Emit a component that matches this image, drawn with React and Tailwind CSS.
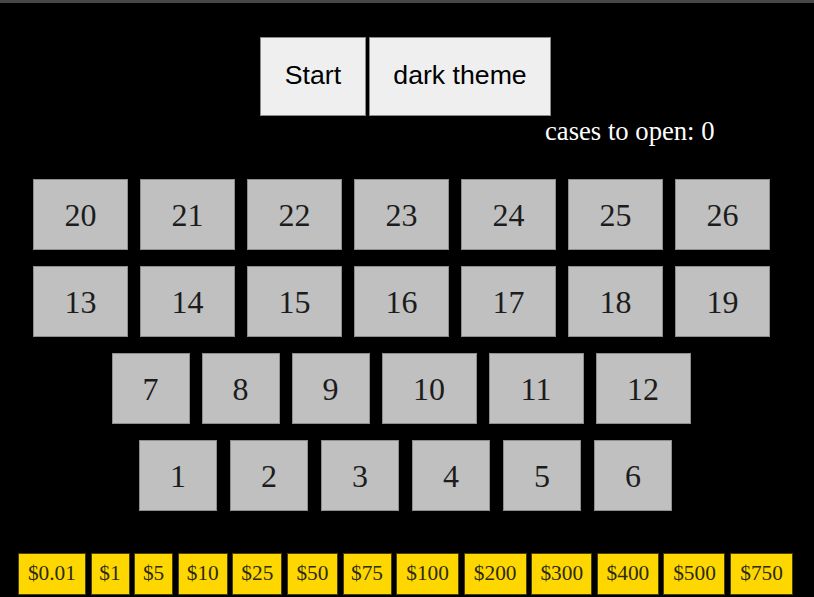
import React from "react";

const row1 = ["20", "21", "22", "23", "24", "25", "26"];
const row2 = ["13", "14", "15", "16", "17", "18", "19"];
const row3 = ["7", "8", "9", "10", "11", "12"];
const row4 = ["1", "2", "3", "4", "5", "6"];

const money = [
  { t: "$0.01", w: "w-[68px]" },
  { t: "$1", w: "w-[39px]" },
  { t: "$5", w: "w-[39px]" },
  { t: "$10", w: "w-[50px]" },
  { t: "$25", w: "w-[50px]" },
  { t: "$50", w: "w-[51px]" },
  { t: "$75", w: "w-[49px]" },
  { t: "$100", w: "w-[63px]" },
  { t: "$200", w: "w-[63px]" },
  { t: "$300", w: "w-[61px]" },
  { t: "$400", w: "w-[62px]" },
  { t: "$500", w: "w-[62px]" },
  { t: "$750", w: "w-[63px]" },
];

const serif = "font-['Liberation_Serif','Times_New_Roman',serif]";

function Case({ n }) {
  const w = n.length > 1 ? "w-[95px]" : "w-[78px]";
  return (
    <div
      className={`${w} h-[71px] flex items-center justify-center bg-[#c0c0c0] border border-[#8e8e8e] text-[32px] text-[#1c1c1c] ${serif}`}
    >
      {n}
    </div>
  );
}

export default function App() {
  return (
    <div className="w-[814px] h-[597px] overflow-hidden bg-black flex flex-col">
      <div className="h-[3px] bg-[#474747] shrink-0" />
      <div className="mt-[34px] flex justify-center gap-[3px] pr-[3px]">
        <button className="w-[106px] h-[79px] pb-[3px] bg-[#efefef] border border-[#8a8a8a] text-black text-[26.67px] font-['Liberation_Sans',Arial,sans-serif]">
          Start
        </button>
        <button className="w-[182px] h-[79px] pb-[3px] bg-[#efefef] border border-[#8a8a8a] text-black text-[26.67px] font-['Liberation_Sans',Arial,sans-serif]">
          dark theme
        </button>
      </div>
      <div className={`pl-[545px] text-white text-[26.67px] leading-[31px] ${serif}`}>
        cases to open: 0
      </div>
      <div className="mt-[32px] flex flex-col gap-[16px]">
        <div className="flex justify-center gap-[12px] pr-[11px]">
          {row1.map((n) => (
            <Case key={n} n={n} />
          ))}
        </div>
        <div className="flex justify-center gap-[12px] pr-[11px]">
          {row2.map((n) => (
            <Case key={n} n={n} />
          ))}
        </div>
        <div className="flex justify-center gap-[12px] pr-[12px]">
          {row3.map((n) => (
            <Case key={n} n={n} />
          ))}
        </div>
        <div className="flex justify-center gap-[13px] pr-[3px]">
          {row4.map((n) => (
            <Case key={n} n={n} />
          ))}
        </div>
      </div>
      <div className="mt-[42px] flex justify-center gap-[4.6px] pr-[3px]">
        {money.map((m) => (
          <div
            key={m.t}
            className={`${m.w} h-[42px] shrink-0 flex items-center justify-center bg-[#ffd700] border border-[#4a4200] text-[21.33px] text-[#2b2b10] ${serif}`}
          >
            {m.t}
          </div>
        ))}
      </div>
    </div>
  );
}
